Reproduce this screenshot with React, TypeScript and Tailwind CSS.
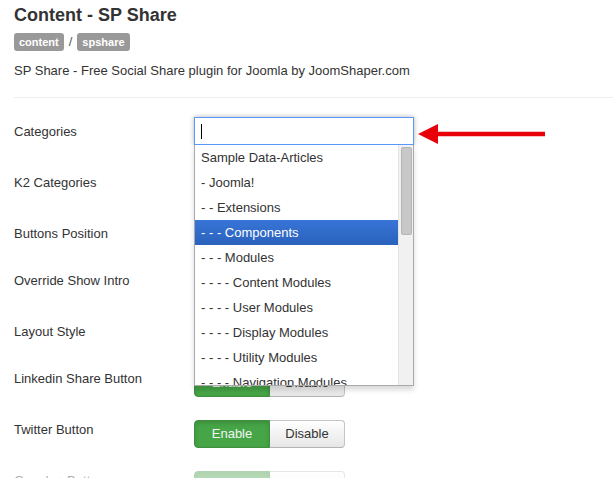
import React from 'react';

const font = { fontFamily: '"Liberation Sans", Arial, sans-serif' };

const categories = [
  'Sample Data-Articles',
  '- Joomla!',
  '- - Extensions',
  '- - - Components',
  '- - - Modules',
  '- - - - Content Modules',
  '- - - - User Modules',
  '- - - - Display Modules',
  '- - - - Utility Modules',
  '- - - - Navigation Modules',
];

function Toggle() {
  return (
    <div className="flex h-[28px] text-[13px]">
      <div className="w-[76px] flex items-center justify-center rounded-l-[4px] bg-[#46a546] border border-[#3f8f3f] text-[#f4f4f4] shadow-[inset_0_2px_4px_rgba(0,0,0,0.15)]">
        Enable
      </div>
      <div className="w-[75px] flex items-center justify-center rounded-r-[4px] border border-l-0 border-[#c4c4c4] border-b-[#b3b3b3] bg-gradient-to-b from-white to-[#e6e6e6] text-[#333]">
        Disable
      </div>
    </div>
  );
}

function SelectBox() {
  return <div className="w-[220px] h-[28px] rounded-[3px] border border-[#aaa] bg-white" />;
}

function CategoryPicker() {
  return (
    <div className="relative w-[220px] h-[28px] -mt-[5px]">
      <div className="h-[28px] border border-[#5897fb] bg-white shadow-[0_0_5px_rgba(0,0,0,0.3)] flex items-center pl-[6px]">
        <span className="block w-px h-[15px] bg-black" />
      </div>
      {/* open chosen dropdown */}
      <div className="absolute left-0 top-[28px] z-10 w-[220px] h-[241px] bg-white border border-t-0 border-[#aaa] shadow-[0_4px_5px_rgba(0,0,0,0.15)] flex overflow-hidden">
        <ul className="flex-1 h-[240px] overflow-hidden text-[13px] text-[#333]">
          {categories.map((c, i) => (
            <li
              key={i}
              className={
                'h-[25px] leading-[25px] px-[6px] whitespace-nowrap ' +
                (i === 3 ? 'bg-gradient-to-b from-[#3875d7] to-[#2a62bc] text-white' : '')
              }
            >
              {c}
            </li>
          ))}
        </ul>
        <div className="w-[15px] h-[240px] bg-[#f1f1f1] border-l border-[#e3e3e3] pt-[2px] flex justify-center">
          <div className="w-[11px] h-[88px] bg-[#c8c8c8] border border-[#b5b5b5] rounded-[2px]" />
        </div>
      </div>
    </div>
  );
}

export default function App() {
  const rows: { label: string; h: number; control: React.ReactNode; faded?: boolean }[] = [
    { label: 'Categories', h: 51, control: <CategoryPicker /> },
    { label: 'K2 Categories', h: 51, control: <SelectBox /> },
    { label: 'Buttons Position', h: 47, control: <SelectBox /> },
    { label: 'Override Show Intro', h: 51, control: <Toggle /> },
    { label: 'Layout Style', h: 47, control: <SelectBox /> },
    { label: 'Linkedin Share Button', h: 51, control: <Toggle /> },
    { label: 'Twitter Button', h: 51, control: <Toggle /> },
    { label: 'Google+ Button', h: 51, control: <Toggle />, faded: true },
  ];

  return (
    <div className="w-[613px] h-[478px] overflow-hidden bg-white text-[#333] relative" style={font}>
      <div className="pl-[14px]">
        <h1 className="mt-[3px] h-[24px] leading-[24px] text-[18px] font-bold text-[#333]">Content - SP Share</h1>
        <div className="mt-[6px] flex items-center h-[18px] text-[11px]">
          <span className="h-[18px] leading-[18px] px-[5px] rounded-[3px] bg-[#999] text-white font-bold">content</span>
          <span className="px-[5px] text-[13px] text-[#555]">/</span>
          <span className="h-[18px] leading-[18px] px-[5px] rounded-[3px] bg-[#999] text-white font-bold">spshare</span>
        </div>
        <p className="mt-[11px] text-[13px] leading-[18px]">SP Share - Free Social Share plugin for Joomla by JoomShaper.com</p>
        <div className="mt-[17px] border-t border-[#eee]" />
        <div className="mt-[25px] flex flex-col">
          {rows.map((r, i) => (
            <div
              key={i}
              className={'flex items-start ' + (r.faded ? 'opacity-40' : '')}
              style={{ height: r.h }}
            >
              <label className="w-[180px] text-[13px] leading-[18px] text-[#333]">{r.label}</label>
              <div className="-mt-px">{r.control}</div>
            </div>
          ))}
        </div>
      </div>

      {/* red annotation arrow */}
      <svg className="absolute left-[416px] top-[120px]" width="132" height="28" viewBox="0 0 132 28">
        <line x1="20" y1="14" x2="129" y2="14" stroke="#e8000b" strokeWidth="4.5" />
        <polygon points="2,14 22,4 22,24" fill="#e8000b" />
      </svg>
    </div>
  );
}
